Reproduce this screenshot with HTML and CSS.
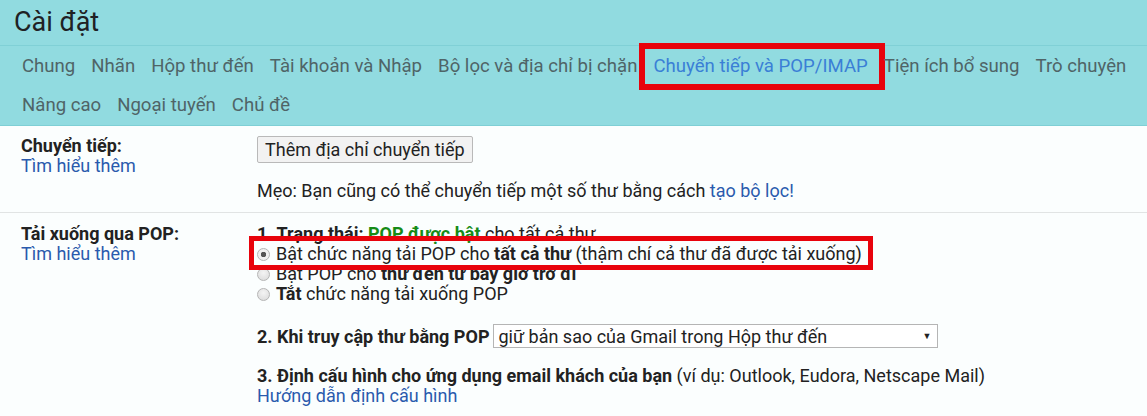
FILE: index.html
```html
<!DOCTYPE html>
<html lang="vi">
<head>
<meta charset="utf-8">
<title>Cài đặt</title>
<link rel="stylesheet" href="styles.css">
</head>
<body>
<header class="top">
  <h1 class="title">Cài đặt</h1>
  <nav class="tabs">
    <a class="tab">Chung</a>
    <a class="tab">Nhãn</a>
    <a class="tab">Hộp thư đến</a>
    <a class="tab">Tài khoản và Nhập</a>
    <a class="tab">Bộ lọc và địa chỉ bị chặn</a>
    <a class="tab active">Chuyển tiếp và POP/IMAP</a>
    <a class="tab">Tiện ích bổ sung</a>
    <a class="tab">Trò chuyện</a>
    <a class="tab">Nâng cao</a>
    <a class="tab">Ngoại tuyến</a>
    <a class="tab">Chủ đề</a>
  </nav>
</header>
<main class="content">
  <section class="row row-fwd">
    <div class="label">
      <div class="label-title">Chuyển tiếp:</div>
      <a class="link">Tìm hiểu thêm</a>
    </div>
    <div class="value">
      <button class="btn">Thêm địa chỉ chuyển tiếp</button>
      <p class="tip">Mẹo: Bạn cũng có thể chuyển tiếp một số thư bằng cách <a class="link">tạo bộ lọc!</a></p>
    </div>
  </section>
  <section class="row row-pop">
    <div class="label">
      <div class="label-title">Tải xuống qua POP:</div>
      <a class="link">Tìm hiểu thêm</a>
    </div>
    <div class="value">
      <div class="status"><b>1. Trạng thái: <span class="green">POP được bật</span></b> cho tất cả thư</div>
      <label class="radio-row highlight"><span class="radio checked"></span>Bật chức năng tải POP cho <b>tất cả thư</b> (thậm chí cả thư đã được tải xuống)</label>
      <label class="radio-row"><span class="radio"></span>Bật POP cho <b>thư đến từ bây giờ trở đi</b></label>
      <label class="radio-row"><span class="radio"></span><b>Tắt</b> chức năng tải xuống POP</label>
      <div class="step step2"><b>2. Khi truy cập thư bằng POP</b>
        <span class="select">giữ bản sao của Gmail trong Hộp thư đến<span class="caret">▼</span></span>
      </div>
      <div class="step step3"><b>3. Định cấu hình cho ứng dụng email khách của bạn</b> (ví dụ: Outlook, Eudora, Netscape Mail)</div>
      <a class="link">Hướng dẫn định cấu hình</a>
    </div>
  </section>
</main>
</body>
</html>
```
FILE: styles.css
```css
*, *::before, *::after { box-sizing: border-box; }
html, body { margin: 0; padding: 0; }
body {
  width: 1147px;
  height: 416px;
  overflow: hidden;
  background: #fbfefe;
  font-family: Roboto, "Noto Sans", Arial, sans-serif;
  color: #222;
}
.top {
  background: #91dbe0;
  height: 126px;
  border-bottom: 1px solid #7fcfd5;
}
.title {
  margin: 0;
  height: 46px;
  padding: 5px 0 0 14px;
  font-weight: 400;
  font-size: 27px;
  line-height: 34px;
  color: #202124;
  border-bottom: 1px solid #80d0d6;
}
.tabs {
  display: flex;
  flex-wrap: wrap;
  column-gap: 16px;
  row-gap: 17px;
  padding: 9px 0 0 22px;
}
.tab {
  position: relative;
  font-size: 18.6px;
  line-height: 22px;
  color: #4f6467;
}
.tab.active { color: #3a7fd6; }
.tab.active::after {
  content: "";
  position: absolute;
  left: -14px;
  right: -17px;
  top: -12px;
  bottom: -13px;
  border: 6px solid #e8030c;
}
.row {
  display: grid;
  grid-template-columns: 236px 1fr;
  padding-left: 21px;
  font-size: 18px;
}
.row-fwd {
  padding-top: 10px;
  height: 87px;
  border-bottom: 1px solid #e1e4e4;
}
.row-pop { padding-top: 11px; }
.label-title { font-weight: 700; line-height: 20px; }
.label .link { display: block; line-height: 20px; }
.link { color: #2a5aad; text-decoration: none; }
.btn {
  font: inherit;
  font-size: 18px;
  color: #222;
  background: #f2f2f2;
  border: 1px solid #b9b9b9;
  border-radius: 2px;
  padding: 0 7px;
  height: 27px;
  line-height: 23px;
}
.tip { margin: 17px 0 0; line-height: 22px; }
.status { line-height: 20px; }
.green { color: #168b16; }
.radio-row {
  position: relative;
  display: block;
  line-height: 20px;
  white-space: nowrap;
}
.radio {
  display: inline-block;
  vertical-align: -1px;
  width: 13px;
  height: 13px;
  border-radius: 50%;
  border: 1px solid #b5b5b5;
  background: radial-gradient(circle at 50% 35%, #f4f4f4, #d9d9d9);
  margin-right: 6px;
}
.radio.checked {
  background: radial-gradient(circle, #555 0 2.5px, #f0f0f0 3px);
}
.radio-row.highlight::after {
  content: "";
  position: absolute;
  z-index: 1;
  left: -8px;
  top: -8px;
  width: 624px;
  height: 34px;
  border: 5px solid #e8030c;
}
.step2 {
  margin-top: 20px;
  display: flex;
  align-items: center;
  gap: 4px;
}
.select {
  display: flex;
  align-items: center;
  justify-content: space-between;
  width: 445px;
  height: 24px;
  padding: 0 6px 0 4px;
  border: 1px solid #b5b5b5;
  background: #fff;
  font-weight: 400;
}
.caret { font-size: 9px; color: #222; }
.step3 { margin-top: 18px; line-height: 20px; }
.value > .link { display: block; line-height: 20px; }
```
